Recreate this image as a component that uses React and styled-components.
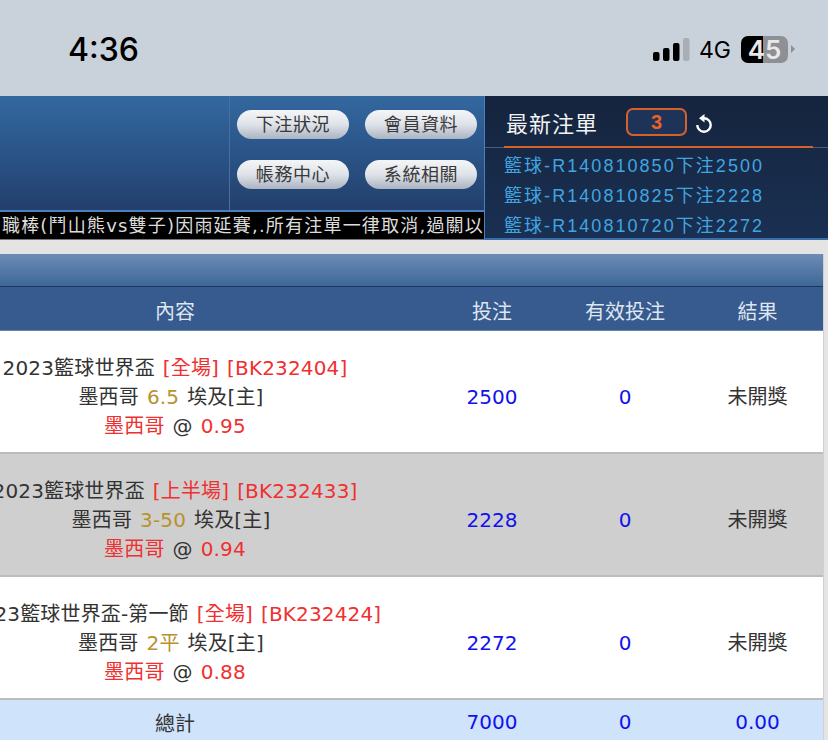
import React from 'react';
import styled, { createGlobalStyle } from 'styled-components';

const Global = createGlobalStyle`
  html, body { margin: 0; padding: 0; background: #e4e4e4; }
  * { box-sizing: border-box; }
`;
const FONT = `"DejaVu Sans", "Noto Sans CJK TC", sans-serif`;

const Page = styled.div`
  width: 828px; height: 740px; overflow: hidden; background: #e4e4e4;
  font-family: ${FONT}; color: #333;
`;
const StatusBar = styled.div`
  height: 96px; background: #c9d1da; display: flex; align-items: center;
  padding: 3px 40px 0 68px; justify-content: space-between; color: #000;
`;
const Clock = styled.div`
  font-family: Inter, "Liberation Sans", sans-serif; font-size: 32px; font-weight: 500;
`;
const StatusRight = styled.div`display: flex; align-items: center;`;
const Network = styled.span`
  font-family: Inter, "Liberation Sans", sans-serif; font-size: 23px; font-weight: 400; margin: 0 10px 0 9px;
`;
const Battery = styled.div`
  width: 47px; height: 27px; border-radius: 7px;
  background: linear-gradient(90deg, #000 0 47%, #8d9094 47% 100%);
  font-family: Inter, "Liberation Sans", sans-serif; font-size: 26px; font-weight: 600; line-height: 27px;
  text-align: center; color: #e9e9e9; position: relative;
  &::after {
    content: ''; position: absolute; left: 50px; top: 9px;
    border-left: 4px solid #8d9094; border-top: 4px solid transparent; border-bottom: 4px solid transparent;
  }
`;
const TopBand = styled.div`display: flex; height: 144px;`;
const LeftBand = styled.div`width: 485px; display: flex; flex-direction: column; border-right: 1px solid #4a7fbe;`;
const Banner = styled.div`
  height: 114px; display: flex; justify-content: flex-end;
  background: linear-gradient(180deg, #33689f 0%, #2a5488 50%, #233f6b 100%);
`;
const MenuArea = styled.div`
  width: 255px; border-left: 1px solid #47709f;
  display: grid; grid-template-columns: 112px 112px; column-gap: 16px; row-gap: 21px;
  padding: 14px 0 0 7px; align-content: start;
`;
const MenuButton = styled.div`
  height: 29px; border-radius: 15px; text-align: center; line-height: 27px; font-size: 18px; color: #3a3a3a;
  letter-spacing: .6px; font-family: "Noto Sans CJK TC", sans-serif;
  background: linear-gradient(180deg, #f4f5f7 0%, #dfe3e9 50%, #aab3c2 100%);
`;
const Ticker = styled.div`
  height: 30px; border-top: 2px solid #4a80c0; background: #000; color: #dcdcdc;
  font-size: 18px; line-height: 27px; white-space: nowrap; overflow: hidden; letter-spacing: 1.2px;
  display: flex; justify-content: flex-end; border-bottom: 1px solid #777;
`;
const Latest = styled.div`
  flex: 1; display: flex; flex-direction: column;
  background: linear-gradient(180deg, #15243e 0%, #1a3052 100%);
  border-bottom: 2px solid #3a6ea8;
`;
const LatestHead = styled.div`
  height: 52px; padding: 0 0 0 21px; display: flex; align-items: center; border-bottom: 1px solid #47607f;
  position: relative;
  &::after {
    content: ''; position: absolute; left: 19px; width: 309px; bottom: -1px; height: 2px; background: #d4622a;
  }
`;
const LatestTitle = styled.div`
  font-size: 22px; color: #f2f2f2; font-family: "Noto Sans CJK TC", sans-serif; width: 120px; letter-spacing: 1px;
`;
const CountBadge = styled.div`
  width: 61px; height: 28px; border: 2px solid #d4622a; border-radius: 7px; background: #1d3358;
  color: #e8602c; font-weight: 700; font-size: 20px; text-align: center; line-height: 24px;
  font-family: "Liberation Sans", sans-serif; margin-right: 8px;
`;
const RefreshIcon = styled.svg`width: 18px; height: 20px; margin-top: 3px;`;
const LatestList = styled.div`padding: 3px 0 0 19px; overflow: hidden; flex: 1;`;
const LatestRow = styled.div`
  height: 30px; line-height: 30px; font-size: 18px; letter-spacing: 2.05px; color: #41a5e0; white-space: nowrap;
  font-family: "Liberation Sans", "Noto Sans CJK TC", sans-serif;
`;
const Gap = styled.div`height: 14px;`;
const TableWrap = styled.div`width: 824px; overflow: hidden; border-right: 1px solid #cfcfd4;`;
const TitleBar = styled.div`
  height: 33px; background: linear-gradient(180deg, #6c8cb6 0%, #3e6797 100%); border-bottom: 1px solid #1d3659;
`;
const Row = styled.div`
  display: grid; grid-template-columns: 500px 134px 132px 133px; margin-left: -75px; width: 899px;
  align-items: center; text-align: center;
`;
const HeadRow = styled(Row)`
  height: 44px; background: #375a8f; color: #dfe6f0; font-size: 20px; padding-top: 4px;
  border-bottom: 1px solid #6b83a8;
`;
const BodyRow = styled(Row)`
  height: 123px; padding-top: 11px; background: ${p => p.$alt ? '#cfcfcf' : '#ffffff'};
  border-bottom: 2px solid #bcbcbc; font-size: 20px; line-height: 29px; color: #333;
`;
const TotalRow = styled(Row)`height: 41px; padding-top: 3px; background: #cfe3fb; font-size: 20px; color: #333;`;
const Info = styled.div`white-space: nowrap; letter-spacing: .15px; word-spacing: 1.5px;`;
const MatchLine = styled.div`padding-right: 8px;`;
const Red = styled.span`color: #f03030;`;
const Gold = styled.span`color: #b8922f;`;
const Num = styled.div`color: #1111ee;`;

const rows = [
  { league: '2023籃球世界盃', part: '[全場]', id: '[BK232404]', line: '6.5', amt: '2500', odds: '0.95' },
  { league: '2023籃球世界盃', part: '[上半場]', id: '[BK232433]', line: '3-50', amt: '2228', odds: '0.94', alt: true },
  { league: '2023籃球世界盃-第一節', part: '[全場]', id: '[BK232424]', line: '2平', amt: '2272', odds: '0.88' },
];

export default function App() {
  return (
    <Page>
      <Global />
      <StatusBar>
        <Clock>4:36</Clock>
        <StatusRight>
          <svg width="37" height="24" viewBox="0 0 37 24">
            <rect x="0" y="14" width="6.5" height="9" rx="2" fill="#000" />
            <rect x="10" y="10" width="6.5" height="13" rx="2" fill="#000" />
            <rect x="20" y="5" width="6.5" height="18" rx="2" fill="#000" />
            <rect x="30" y="0" width="6.5" height="23" rx="2" fill="#a9aeb6" />
          </svg>
          <Network>4G</Network>
          <Battery>45</Battery>
        </StatusRight>
      </StatusBar>
      <TopBand>
        <LeftBand>
          <Banner>
            <MenuArea>
              <MenuButton>下注狀況</MenuButton>
              <MenuButton>會員資料</MenuButton>
              <MenuButton>帳務中心</MenuButton>
              <MenuButton>系統相關</MenuButton>
            </MenuArea>
          </Banner>
          <Ticker>國職棒(鬥山熊vs雙子)因雨延賽,.所有注單一律取消,過關以</Ticker>
        </LeftBand>
        <Latest>
          <LatestHead>
            <LatestTitle>最新注單</LatestTitle>
            <CountBadge>3</CountBadge>
            <RefreshIcon viewBox="0 0 18 20">
              <path d="M9 5.3A6.7 6.7 0 1 1 2.3 12" fill="none" stroke="#fff" strokeWidth="2.4" />
              <polygon points="9.5,1 9.5,9.5 4,5.3" fill="#fff" />
            </RefreshIcon>
          </LatestHead>
          <LatestList>
            <LatestRow>籃球-R140810850下注2500</LatestRow>
            <LatestRow>籃球-R140810825下注2228</LatestRow>
            <LatestRow>籃球-R140810720下注2272</LatestRow>
          </LatestList>
        </Latest>
      </TopBand>
      <Gap />
      <TableWrap>
        <TitleBar />
        <HeadRow>
          <div>內容</div><div>投注</div><div>有效投注</div><div>結果</div>
        </HeadRow>
        {rows.map(r => (
          <BodyRow key={r.id} $alt={r.alt}>
            <Info>
              <div>{r.league} <Red>{r.part} {r.id}</Red></div>
              <MatchLine>墨西哥 <Gold>{r.line}</Gold> 埃及[主]</MatchLine>
              <div><Red>墨西哥</Red> @ <Red>{r.odds}</Red></div>
            </Info>
            <Num>{r.amt}</Num>
            <Num>0</Num>
            <div>未開獎</div>
          </BodyRow>
        ))}
        <TotalRow>
          <div>總計</div>
          <Num>7000</Num>
          <Num>0</Num>
          <Num>0.00</Num>
        </TotalRow>
      </TableWrap>
    </Page>
  );
}
